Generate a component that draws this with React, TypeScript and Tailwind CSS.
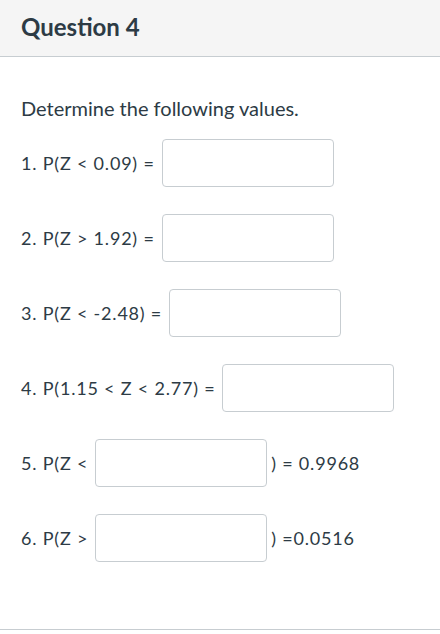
import React from 'react';

const rows: { pre: string; post?: string }[] = [
  { pre: '1. P(Z < 0.09) =' },
  { pre: '2. P(Z > 1.92) =' },
  { pre: '3. P(Z < -2.48) =' },
  { pre: '4. P(1.15 < Z < 2.77) =' },
  { pre: '5. P(Z <', post: ') = 0.9968' },
  { pre: '6. P(Z >', post: ') =0.0516' },
];

export default function App() {
  return (
    <div className="w-[440px] h-[634px] bg-white text-[#2d3b45] flex flex-col" style={{ fontFamily: 'Lato, "Open Sans", sans-serif' }}>
      <div className="h-[57px] bg-[#f5f5f5] border-b border-[#c7cdd1] flex items-center pl-[21px] shrink-0">
        <h2 className="text-[24px] font-bold leading-none pb-[2px]">Question 4</h2>
      </div>
      <div className="flex-1 pl-[21px] pt-[37px] border-b border-[#c7cdd1] mb-[4px]">
        <p className="text-[20px] leading-[28px]">Determine the following values.</p>
        <div className="mt-[17px] flex flex-col gap-[27px]">
          {rows.map((r) => (
            <div key={r.pre} className="flex items-center text-[18px] tracking-[0.8px] h-[48px]">
              <span>{r.pre}</span>
              <input
                type="text"
                className="ml-[7px] w-[172px] h-[48px] border border-[#c7cdd1] rounded-[4px] bg-white outline-none"
              />
              {r.post && <span className="ml-[4px]">{r.post}</span>}
            </div>
          ))}
        </div>
      </div>
    </div>
  );
}
